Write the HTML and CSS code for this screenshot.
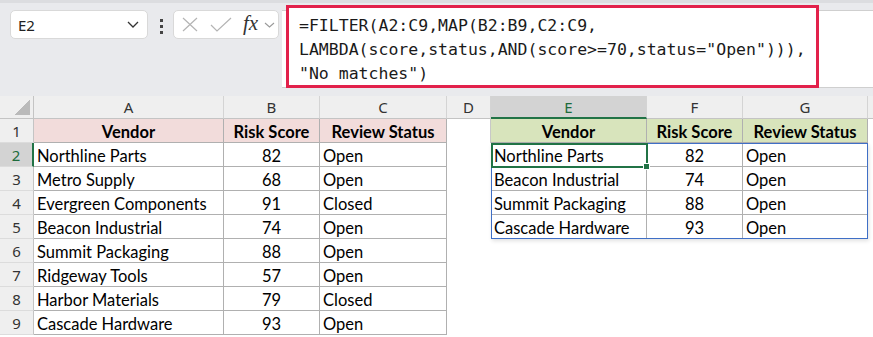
FILE: index.html
```html
<!DOCTYPE html>
<html lang="en">
<head>
    <meta charset="UTF-8">
    <meta name="viewport" content="width=device-width, initial-scale=1.0">
    <title>FILTER MAP LAMBDA</title>
    <link rel="stylesheet" href="styles.css">
</head>
<body>
    <div class="toolbar">
        <div class="namebox">
            <span class="ref">E2</span>
            <svg class="chev" width="12" height="7" viewBox="0 0 12 7"><path d="M1 1 L6 6 L11 1" fill="none" stroke="#333" stroke-width="1.3"/></svg>
        </div>
        <div class="dots"><i></i><i></i><i></i></div>
        <div class="fnbox">
            <svg width="16" height="15" viewBox="0 0 16 15"><path d="M1 1 L15 14 M15 1 L1 14" stroke="#b4b4b4" stroke-width="1.2" fill="none"/></svg>
            <svg width="22" height="15" viewBox="0 0 22 15"><path d="M1 8 L7 14 L21 1" stroke="#b4b4b4" stroke-width="1.2" fill="none"/></svg>
            <span class="fx">fx</span>
            <svg width="11" height="6" viewBox="0 0 11 6"><path d="M1 1 L5.5 5 L10 1" fill="none" stroke="#9a9a9a" stroke-width="1.1"/></svg>
        </div>
        <div class="formula">
            <div class="highlight">
                <div>=FILTER(A2:C9,MAP(B2:B9,C2:C9,</div>
                <div>LAMBDA(score,status,AND(score&gt;=70,status="Open"))),</div>
                <div>"No matches")</div>
            </div>
        </div>
    </div>

    <div class="sheet">
        <div class="corner"><span class="tri"></span></div>
        <div class="ch">A</div>
        <div class="ch">B</div>
        <div class="ch">C</div>
        <div class="ch">D</div>
        <div class="ch sel">E</div>
        <div class="ch">F</div>
        <div class="ch">G</div>
        <div class="ch end"></div>

        <div class="rh">1</div>
        <div class="tb pink hd">Vendor</div>
        <div class="tb pink hd">Risk Score</div>
        <div class="tb pink hd">Review Status</div>
        <div class="c gap"></div>
        <div class="tb green hd">Vendor</div>
        <div class="tb green hd">Risk Score</div>
        <div class="tb green hd">Review Status</div>
        <div class="c"></div>

        <div class="rh sel">2</div>
        <div class="tb">Northline Parts</div>
        <div class="tb num">82</div>
        <div class="tb">Open</div>
        <div class="c"></div>
        <div class="tb">Northline Parts</div>
        <div class="tb num">82</div>
        <div class="tb">Open</div>
        <div class="c"></div>

        <div class="rh">3</div>
        <div class="tb">Metro Supply</div>
        <div class="tb num">68</div>
        <div class="tb">Open</div>
        <div class="c"></div>
        <div class="tb">Beacon Industrial</div>
        <div class="tb num">74</div>
        <div class="tb">Open</div>
        <div class="c"></div>

        <div class="rh">4</div>
        <div class="tb">Evergreen Components</div>
        <div class="tb num">91</div>
        <div class="tb">Closed</div>
        <div class="c"></div>
        <div class="tb">Summit Packaging</div>
        <div class="tb num">88</div>
        <div class="tb">Open</div>
        <div class="c"></div>

        <div class="rh">5</div>
        <div class="tb">Beacon Industrial</div>
        <div class="tb num">74</div>
        <div class="tb">Open</div>
        <div class="c"></div>
        <div class="tb">Cascade Hardware</div>
        <div class="tb num">93</div>
        <div class="tb">Open</div>
        <div class="c"></div>

        <div class="rh">6</div>
        <div class="tb">Summit Packaging</div>
        <div class="tb num">88</div>
        <div class="tb">Open</div>
        <div class="c"></div><div class="c"></div><div class="c"></div><div class="c"></div><div class="c"></div>

        <div class="rh">7</div>
        <div class="tb">Ridgeway Tools</div>
        <div class="tb num">57</div>
        <div class="tb">Open</div>
        <div class="c"></div><div class="c"></div><div class="c"></div><div class="c"></div><div class="c"></div>

        <div class="rh">8</div>
        <div class="tb">Harbor Materials</div>
        <div class="tb num">79</div>
        <div class="tb">Closed</div>
        <div class="c"></div><div class="c"></div><div class="c"></div><div class="c"></div><div class="c"></div>

        <div class="rh">9</div>
        <div class="tb">Cascade Hardware</div>
        <div class="tb num">93</div>
        <div class="tb">Open</div>
        <div class="c"></div><div class="c"></div><div class="c"></div><div class="c"></div><div class="c"></div>

        <div class="spill"></div>
        <div class="active"><span class="handle"></span></div>
    </div>
</body>
</html>
```

FILE: styles.css
```css
body {
    margin: 0;
    background: #fff;
    font-family: "Noto Sans", sans-serif;
    overflow: hidden;
}
.toolbar {
    display: flex;
    align-items: flex-start;
    height: 93px;
    background: #e9eaed;
    border-top: 3px solid #dcdde0;
}
.namebox {
    display: flex;
    align-items: center;
    justify-content: space-between;
    box-sizing: border-box;
    width: 138px;
    height: 29px;
    margin: 7px 0 0 10px;
    padding: 0 8px 0 7px;
    background: #fff;
    border: 1px solid #d9d9d9;
    border-radius: 5px;
    font-size: 15px;
    color: #222;
}
.dots {
    display: flex;
    flex-direction: column;
    gap: 3px;
    margin: 16px 0 0 12px;
}
.dots i {
    display: block;
    width: 3px;
    height: 3px;
    background: #444;
}
.fnbox {
    display: flex;
    align-items: center;
    box-sizing: border-box;
    width: 106px;
    height: 29px;
    margin: 7px 0 0 10px;
    padding: 0 0 0 8px;
    gap: 11px;
    background: #fff;
    border: 1px solid #d9d9d9;
    border-radius: 5px;
}
.fnbox svg:nth-child(2) {
    margin-left: 1px;
}
.fx {
    font-family: "Liberation Serif", serif;
    font-style: italic;
    font-size: 21px;
    color: #333;
    margin: -3px -5px 0 0;
}
.formula {
    flex: 1;
    box-sizing: border-box;
    height: 78px;
    margin: 7px 0 0 3px;
    background: #fff;
    border-top: 1px solid #cfcfcf;
    border-bottom: 1px solid #cfcfcf;
}
.highlight {
    box-sizing: border-box;
    width: 533px;
    height: 83px;
    margin: -6px 0 0 4px;
    padding: 6px 0 0 10px;
    border: 3px solid #e2214b;
    background: #fff;
    font-family: "DejaVu Sans Mono", monospace;
    font-size: 16.5px;
    line-height: 24px;
    color: #1a1a1a;
    white-space: nowrap;
}
.sheet {
    position: relative;
    display: grid;
    grid-template-columns: 34px 190px 96px 127px 44px 156px 96px 125px 1fr;
    grid-template-rows: 23px repeat(9, 24px);
    font-family: Lato, sans-serif;
    font-size: 16.5px;
    color: #000;
}
.sheet > div {
    box-sizing: border-box;
}
.corner {
    display: flex;
    align-items: flex-end;
    justify-content: flex-end;
    padding: 0 3px 3px 0;
    background: #efefef;
    border-right: 1px solid #c4c4c4;
    border-bottom: 1px solid #c4c4c4;
}
.tri {
    width: 15px;
    height: 15px;
    background: linear-gradient(to bottom right, transparent 50%, #bababa 50%);
}
.ch {
    display: flex;
    align-items: center;
    justify-content: center;
    background: #efefef;
    border-right: 1px solid #d4d4d4;
    border-bottom: 1px solid #c4c4c4;
    font-family: "Noto Sans", sans-serif;
    font-size: 15px;
    color: #333;
}
.ch.sel {
    background: #d3d3d3;
    color: #1d6b3c;
    border-bottom: 2px solid #217346;
}
.ch.end {
    border-right: 0;
}
.rh {
    display: flex;
    align-items: center;
    justify-content: center;
    padding-top: 1px;
    background: #efefef;
    border-right: 1px solid #c4c4c4;
    border-bottom: 1px solid #dcdcdc;
    font-family: "Noto Sans", sans-serif;
    font-size: 15px;
    color: #333;
}
.rh.sel {
    background: #d3d3d3;
    color: #1d6b3c;
    border-right: 2px solid #217346;
}
.tb {
    padding: 2px 0 0 3px;
    line-height: 22px;
    white-space: nowrap;
    overflow: hidden;
    border-right: 1px solid #b0b0b0;
    border-bottom: 1px solid #b0b0b0;
}
.num {
    text-align: center;
    padding-left: 0;
}
.hd {
    font-weight: bold;
    text-align: center;
    padding-left: 0;
}
.pink {
    background: #f2dcdb;
}
.green {
    background: #d8e4bc;
}
.gap {
    border-right: 1px solid #c8c8c8;
}
/* overlays: spill range outline and active cell */
.spill {
    position: absolute;
    grid-column: 6 / 9;
    grid-row: 3 / 7;
    inset: 0;
    border: 1px solid #3f6fc6;
    box-shadow: 1px 2px 4px rgba(0, 0, 0, 0.12);
}
.active {
    position: absolute;
    grid-column: 6 / 7;
    grid-row: 3 / 4;
    inset: 0 -1px -1px 0;
    border: 2px solid #217346;
}
.handle {
    position: absolute;
    right: -4px;
    bottom: -4px;
    width: 5px;
    height: 5px;
    background: #217346;
    border: 1px solid #fff;
}
```
